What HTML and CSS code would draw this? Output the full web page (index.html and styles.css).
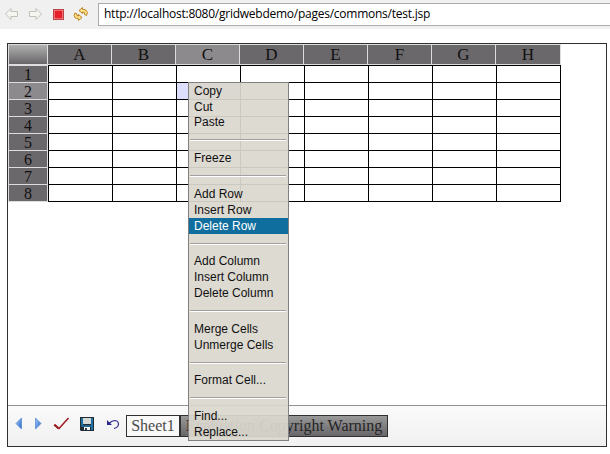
FILE: index.html
```html
<!DOCTYPE html>
<html lang="en">
<head>
<meta charset="utf-8">
<title>GridWeb</title>
<link rel="stylesheet" href="styles.css">
</head>
<body>
<header class="browser-bar">
  <svg class="nav" viewBox="0 0 16 14" width="16" height="14"><path class="arrow" d="M1.500 7 7 1.500V4.500h6.500v5H7v3z"/></svg>
  <svg class="nav" viewBox="0 0 16 14" width="16" height="14"><path class="arrow" d="M14.500 7 9 1.500V4.500H2.500v5H9v3z"/></svg>
  <svg class="stop" viewBox="0 0 12 12" width="12" height="12"><rect x=".5" y=".5" width="10" height="10" fill="#f7b9b9" stroke="#bd4545"/><rect x="1.500" y="1.500" width="8" height="8" fill="#e5202b"/></svg>
  <svg class="refresh" viewBox="0 0 16 16" width="16" height="16"><g fill="#fbe08a" stroke="#bd8426" stroke-linejoin="round"><path d="M6 4.500 9.500 1.500V3.200Q13.500 3 14.500 6.500L13.500 9.500 11.500 8.500Q12.500 6 9.500 6V7.500z"/><path d="M9 11.500 5.500 14.500V12.800Q1.500 13 1 9.500L2 7 4 8Q3 10 5.500 10V8.500z"/></g></svg>
  <div class="address">http://localhost:8080/gridwebdemo/pages/commons/test.jsp</div>
</header>
<main class="grid-web">
  <div class="sheet">
    <table>
      <thead><tr><th class="corner"></th><th>A</th><th>B</th><th class="active">C</th><th>D</th><th>E</th><th>F</th><th>G</th><th>H</th></tr></thead>
      <tbody>
        <tr><th>1</th><td></td><td></td><td></td><td></td><td></td><td></td><td></td><td></td></tr>
        <tr><th class="active">2</th><td></td><td></td><td class="selected"></td><td></td><td></td><td></td><td></td><td></td></tr>
        <tr><th>3</th><td></td><td></td><td></td><td></td><td></td><td></td><td></td><td></td></tr>
        <tr><th>4</th><td></td><td></td><td></td><td></td><td></td><td></td><td></td><td></td></tr>
        <tr><th>5</th><td></td><td></td><td></td><td></td><td></td><td></td><td></td><td></td></tr>
        <tr><th>6</th><td></td><td></td><td></td><td></td><td></td><td></td><td></td><td></td></tr>
        <tr><th>7</th><td></td><td></td><td></td><td></td><td></td><td></td><td></td><td></td></tr>
        <tr><th>8</th><td></td><td></td><td></td><td></td><td></td><td></td><td></td><td></td></tr>
      </tbody>
    </table>
  </div>
  <footer class="bottom-bar">
    <svg width="118" height="40" viewBox="0 0 118 40">
      <defs><linearGradient id="blue" x2="1" y2="1"><stop stop-color="#a9cdfa"/><stop offset="1" stop-color="#2464c8"/></linearGradient></defs>
      <path d="M13.500 12v11L8 17.500z" fill="url(#blue)" stroke="#4c83d2" stroke-width=".7"/>
      <path d="M27.500 12v11l5.500-5.500z" fill="url(#blue)" stroke="#4c83d2" stroke-width=".7"/>
      <path d="M46 19 51 22.500 60.500 12" fill="none" stroke="#9c1c20" stroke-width="1.500"/><path d="M46.500 18.500 50.500 22.500" stroke="#9c1c20" stroke-width="2"/>
      <path d="M72 11h14v14H73l-1-1z" fill="#202b32"/><path d="M73 12h2v7h-2zM83 12h2v12h-2z" fill="#1f6fa5"/><path d="M73 19h10v2H73z" fill="#24628b"/><path d="M75 12h8v6h-8z" fill="#d5d8d4"/><path d="M76 21h6v3h-6z" fill="#f4f4f4"/><path d="M77 22h2v2h-2z" fill="#263c49"/>
      <path d="M99 14v5h5z" fill="#29298d"/><path d="M101 17.500Q104 14.500 107 14.500Q110.500 15 110.500 18.500Q110 21.500 106 22.500" fill="none" stroke="#29298d" stroke-width="1.200"/>
    </svg>
    <div class="tab current">Sheet1</div>
    <div class="tab warning">Evaluation Copyright Warning</div>
  </footer>
</main>
<div class="menu" role="menu">
  <div class="item">Copy</div><div class="item">Cut</div><div class="item tight">Paste</div>
  <div class="rule"></div>
  <div class="item">Freeze</div>
  <div class="rule"></div>
  <div class="item">Add Row</div><div class="item">Insert Row</div><div class="item hover">Delete Row</div>
  <div class="rule short"></div>
  <div class="item">Add Column</div><div class="item">Insert Column</div><div class="item">Delete Column</div>
  <div class="rule"></div>
  <div class="item">Merge Cells</div><div class="item">Unmerge Cells</div>
  <div class="rule short"></div>
  <div class="item">Format Cell...</div>
  <div class="rule"></div>
  <div class="item">Find...</div><div class="item">Replace...</div>
</div>
</body>
</html>
```

FILE: styles.css
```css
* { box-sizing: border-box; }
body { margin: 0; height: 454px; overflow: hidden; background: #fff; }
svg { display: block; flex: none; }
.browser-bar { display: flex; height: 29px; padding-top: 3px; background: #f0f0f0; }
.nav { margin: 4px 0 0 4px; }
.nav + .nav { margin-left: 7px; }
.arrow { fill: #f6f6f1; stroke: #bfc1b9; stroke-linejoin: round; }
.stop { margin: 6px 0 0 10px; }
.refresh { margin: 3px 0 0 8px; }
.address { flex: 1; margin-left: 9px; height: 23px; padding-left: 5px; border: 1px solid #ababab; border-right: 0; background: #fff; color: #000; font: 12px/20px "Open Sans", "Noto Sans", sans-serif; letter-spacing: -.25px; white-space: nowrap; }
.grid-web { display: flex; flex-direction: column; width: 600px; height: 404px; margin: 14px 0 0 7px; border: 1px solid #303030; }
.sheet { flex: 1; }
table { width: 553px; table-layout: fixed; border-spacing: 0; border-collapse: separate; }
th, td { padding: 0; }
th { background: #6b686b; color: #101010; font: 17px/16px "Liberation Serif", serif; text-align: center; }
thead th { width: 64px; height: 21px; line-height: 19px; border: solid #ddd; border-width: 1px 1px 1px 0; }
thead th:last-child { width: 65px; }
thead .corner { width: 40px; border-left-width: 1px; background: linear-gradient(#b0b0b0, #686568); }
th.active { background: #8d8a8d; }
tbody tr { height: 17px; }
tbody th { height: 17px; padding-top: 2px; border: solid #ddd; border-width: 1px 1px 0; font-size: 16px; line-height: 14px; }
tbody td { border: solid #000; border-width: 1px 0 0 1px; height: 17px; }
tbody td:last-child { border-right-width: 1px; }
tbody tr:last-child { height: 18px; }
tbody tr:last-child > * { height: 18px; border-bottom-width: 1px; }
.selected { background: #ddddfc; }
.bottom-bar { display: flex; height: 41px; border-top: 1px solid #929292; background: linear-gradient(#fafafa, #f0f0f0); }
.tab { height: 22px; margin-top: 9px; border: 1px solid #303030; font: 16px/19px "Liberation Serif", serif; text-align: center; white-space: nowrap; }
.current { width: 54px; color: #4b4b4b; background: #f8f8f8; }
.warning { width: 208px; color: #242424; background: linear-gradient(#999, #696669); }
.menu { position: absolute; left: 188px; top: 82px; width: 101px; height: 359px; border: 1px solid #808080; background: rgba(218, 215, 207, .93); font: 12px/16px "Liberation Sans", sans-serif; color: #101010; }
.item { height: 16px; padding-left: 5px; white-space: nowrap; }
.tight { margin-top: -1px; }
.hover { background: #106e9e; color: #fff; }
.rule { height: 2px; margin: 9px 2px 9px 1px; border-top: 1px solid #a0a0a0; border-bottom: 1px solid #fff; }
.short { margin-bottom: 8px; }
```
